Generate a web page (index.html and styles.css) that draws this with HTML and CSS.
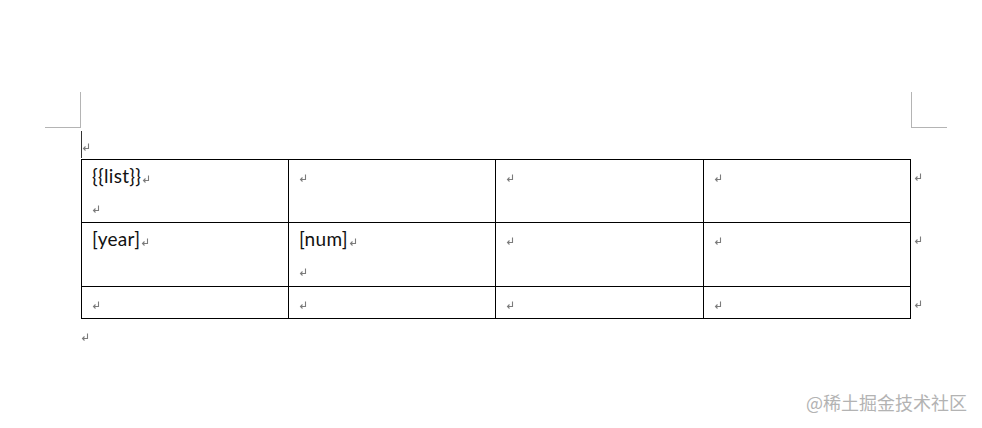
FILE: index.html
```html
<!DOCTYPE html>
<html>
<head>
<meta charset="utf-8">
<link rel="stylesheet" href="styles.css">
</head>
<body>
<div class="page">
  <div class="corners">
    <div class="corner corner-left"></div>
    <div class="corner corner-right"></div>
  </div>
  <div class="doc">
    <div class="para first"><span class="cursor"></span><svg class="pm" viewBox="0 0 8 8"><path d="M6.5 0.5V5.5H1.5M3.5 3.5L1.5 5.5L3.5 7.5" fill="none" stroke="#7c7c7c" stroke-width="1.1"/></svg></div>
    <table class="grid">
      <colgroup><col class="c"><col class="c"><col class="c wide"><col class="c"><col class="ce"></colgroup>
      <tr class="r2">
        <td><div class="line"><span class="txt">{{list}}</span><svg class="pm" viewBox="0 0 8 8"><path d="M6.5 0.5V5.5H1.5M3.5 3.5L1.5 5.5L3.5 7.5" fill="none" stroke="#7c7c7c" stroke-width="1.1"/></svg></div><div class="line"><svg class="pm" viewBox="0 0 8 8"><path d="M6.5 0.5V5.5H1.5M3.5 3.5L1.5 5.5L3.5 7.5" fill="none" stroke="#7c7c7c" stroke-width="1.1"/></svg></div></td>
        <td><div class="line"><svg class="pm" viewBox="0 0 8 8"><path d="M6.5 0.5V5.5H1.5M3.5 3.5L1.5 5.5L3.5 7.5" fill="none" stroke="#7c7c7c" stroke-width="1.1"/></svg></div></td>
        <td><div class="line"><svg class="pm" viewBox="0 0 8 8"><path d="M6.5 0.5V5.5H1.5M3.5 3.5L1.5 5.5L3.5 7.5" fill="none" stroke="#7c7c7c" stroke-width="1.1"/></svg></div></td>
        <td><div class="line"><svg class="pm" viewBox="0 0 8 8"><path d="M6.5 0.5V5.5H1.5M3.5 3.5L1.5 5.5L3.5 7.5" fill="none" stroke="#7c7c7c" stroke-width="1.1"/></svg></div></td>
        <td class="end"><div class="line"><svg class="pm" viewBox="0 0 8 8"><path d="M6.5 0.5V5.5H1.5M3.5 3.5L1.5 5.5L3.5 7.5" fill="none" stroke="#7c7c7c" stroke-width="1.1"/></svg></div></td>
      </tr>
      <tr class="r2 second">
        <td><div class="line"><span class="txt">[year]</span><svg class="pm" viewBox="0 0 8 8"><path d="M6.5 0.5V5.5H1.5M3.5 3.5L1.5 5.5L3.5 7.5" fill="none" stroke="#7c7c7c" stroke-width="1.1"/></svg></div></td>
        <td><div class="line"><span class="txt">[num]</span><svg class="pm" viewBox="0 0 8 8"><path d="M6.5 0.5V5.5H1.5M3.5 3.5L1.5 5.5L3.5 7.5" fill="none" stroke="#7c7c7c" stroke-width="1.1"/></svg></div><div class="line"><svg class="pm" viewBox="0 0 8 8"><path d="M6.5 0.5V5.5H1.5M3.5 3.5L1.5 5.5L3.5 7.5" fill="none" stroke="#7c7c7c" stroke-width="1.1"/></svg></div></td>
        <td><div class="line"><svg class="pm" viewBox="0 0 8 8"><path d="M6.5 0.5V5.5H1.5M3.5 3.5L1.5 5.5L3.5 7.5" fill="none" stroke="#7c7c7c" stroke-width="1.1"/></svg></div></td>
        <td><div class="line"><svg class="pm" viewBox="0 0 8 8"><path d="M6.5 0.5V5.5H1.5M3.5 3.5L1.5 5.5L3.5 7.5" fill="none" stroke="#7c7c7c" stroke-width="1.1"/></svg></div></td>
        <td class="end"><div class="line"><svg class="pm" viewBox="0 0 8 8"><path d="M6.5 0.5V5.5H1.5M3.5 3.5L1.5 5.5L3.5 7.5" fill="none" stroke="#7c7c7c" stroke-width="1.1"/></svg></div></td>
      </tr>
      <tr class="r1">
        <td><div class="line"><svg class="pm" viewBox="0 0 8 8"><path d="M6.5 0.5V5.5H1.5M3.5 3.5L1.5 5.5L3.5 7.5" fill="none" stroke="#7c7c7c" stroke-width="1.1"/></svg></div></td>
        <td><div class="line"><svg class="pm" viewBox="0 0 8 8"><path d="M6.5 0.5V5.5H1.5M3.5 3.5L1.5 5.5L3.5 7.5" fill="none" stroke="#7c7c7c" stroke-width="1.1"/></svg></div></td>
        <td><div class="line"><svg class="pm" viewBox="0 0 8 8"><path d="M6.5 0.5V5.5H1.5M3.5 3.5L1.5 5.5L3.5 7.5" fill="none" stroke="#7c7c7c" stroke-width="1.1"/></svg></div></td>
        <td><div class="line"><svg class="pm" viewBox="0 0 8 8"><path d="M6.5 0.5V5.5H1.5M3.5 3.5L1.5 5.5L3.5 7.5" fill="none" stroke="#7c7c7c" stroke-width="1.1"/></svg></div></td>
        <td class="end"><div class="line"><svg class="pm" viewBox="0 0 8 8"><path d="M6.5 0.5V5.5H1.5M3.5 3.5L1.5 5.5L3.5 7.5" fill="none" stroke="#7c7c7c" stroke-width="1.1"/></svg></div></td>
      </tr>
    </table>
    <div class="para after"><svg class="pm" viewBox="0 0 8 8"><path d="M6.5 0.5V5.5H1.5M3.5 3.5L1.5 5.5L3.5 7.5" fill="none" stroke="#7c7c7c" stroke-width="1.1"/></svg></div>
  </div>
  <div class="watermark">@稀土掘金技术社区</div>
</div>
</body>
</html>
```
FILE: styles.css
```css
html, body {
  margin: 0;
  padding: 0;
  background: #ffffff;
}
body {
  width: 982px;
  height: 428px;
  overflow: hidden;
  font-family: "Lato", "Liberation Sans", sans-serif;
}
.page {
  position: relative;
  width: 982px;
  height: 428px;
  padding-top: 92px;
  box-sizing: border-box;
}
.corners {
  display: flex;
  justify-content: space-between;
  padding: 0 35px 0 45px;
}
.corner {
  width: 35px;
  height: 35px;
}
.corner-left {
  border-right: 1px solid #b4b4b4;
  border-bottom: 1px solid #b4b4b4;
}
.corner-right {
  border-left: 1px solid #b4b4b4;
  border-bottom: 1px solid #b4b4b4;
}
.doc {
  padding-left: 81px;
}
.para {
  display: flex;
  align-items: center;
}
.para.first {
  height: 31px;
}
.cursor {
  width: 1px;
  height: 27px;
  background: #333;
  margin-top: 2px;
}
.pm {
  width: 8px;
  height: 8px;
  flex: none;
  display: inline-block;
}
.para.first .pm {
  margin-left: 0;
  margin-top: 6px;
}
.grid {
  border-collapse: collapse;
  table-layout: fixed;
  width: 849px;
}
.grid col.c {
  width: 207px;
}
.grid col.c.wide {
  width: 208px;
}
.grid col.ce {
  width: 20px;
}
.grid td {
  border: 1px solid #000;
  padding: 0 10px;
  vertical-align: top;
  box-sizing: border-box;
}
.grid td.end {
  border: none;
  padding: 0 0 0 3px;
}
.r2 td {
  height: 63px;
}
.r2.second td {
  height: 64px;
}
.r1 td {
  height: 32px;
}
.line {
  height: 31px;
  display: flex;
  align-items: center;
}
.line .pm {
  margin-top: 4px;
}
.txt {
  font-size: 19px;
  color: #111;
  letter-spacing: 0.3px;
}
.txt + .pm {
  margin-left: 1px;
  margin-top: 6px;
}
.para.after {
  height: 38px;
}
.para.after .pm {
  margin-top: -2px;
}
.watermark {
  position: absolute;
  left: 806px;
  top: 389px;
  font-family: "Noto Sans CJK SC", sans-serif;
  font-size: 18px;
  color: #b3b3b3;
  white-space: nowrap;
}
```
